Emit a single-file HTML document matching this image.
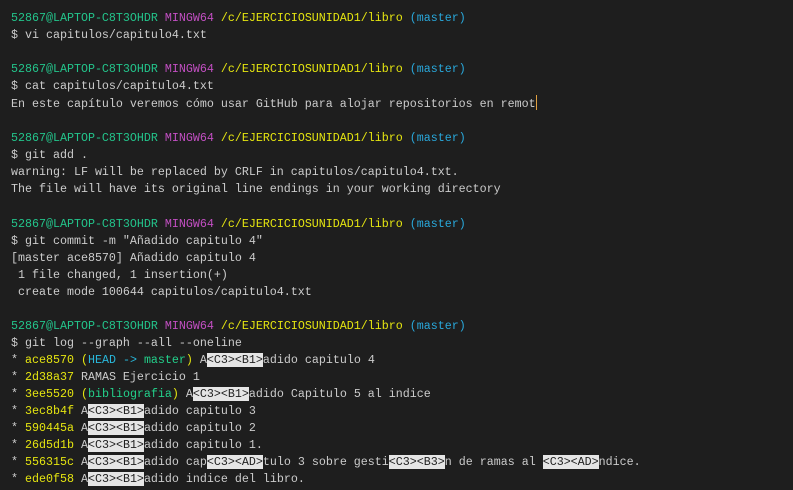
<!DOCTYPE html>
<html><head><meta charset="utf-8"><style>
html,body{margin:0;padding:0;background:#1e1e1e;width:793px;height:490px;overflow:hidden}
pre{margin:0;position:absolute;left:11px;top:10px;font-family:"Liberation Mono","DejaVu Sans Mono",monospace;font-size:11.67px;line-height:17.04px;color:#cccccc;white-space:pre}
.g{color:#23c48b}.m{color:#c34fc3}.y{color:#e5e510}.c{color:#29a8db}.h{color:#29b8db}.gr{color:#23d18b}
.b{background:#e5e5e5;color:#1e1e1e}
.cur{display:inline-block;width:1px;height:15px;background:#e0a040;vertical-align:-3px}
</style></head><body><pre><span class="g">52867@LAPTOP-C8T3OHDR</span> <span class="m">MINGW64</span> <span class="y">/c/EJERCICIOSUNIDAD1/libro</span> <span class="c">(master)</span>
$ vi capitulos/capitulo4.txt

<span class="g">52867@LAPTOP-C8T3OHDR</span> <span class="m">MINGW64</span> <span class="y">/c/EJERCICIOSUNIDAD1/libro</span> <span class="c">(master)</span>
$ cat capitulos/capitulo4.txt
En este capítulo veremos cómo usar GitHub para alojar repositorios en remot<span class="cur"></span>

<span class="g">52867@LAPTOP-C8T3OHDR</span> <span class="m">MINGW64</span> <span class="y">/c/EJERCICIOSUNIDAD1/libro</span> <span class="c">(master)</span>
$ git add .
warning: LF will be replaced by CRLF in capitulos/capitulo4.txt.
The file will have its original line endings in your working directory

<span class="g">52867@LAPTOP-C8T3OHDR</span> <span class="m">MINGW64</span> <span class="y">/c/EJERCICIOSUNIDAD1/libro</span> <span class="c">(master)</span>
$ git commit -m "Añadido capitulo 4"
[master ace8570] Añadido capitulo 4
 1 file changed, 1 insertion(+)
 create mode 100644 capitulos/capitulo4.txt

<span class="g">52867@LAPTOP-C8T3OHDR</span> <span class="m">MINGW64</span> <span class="y">/c/EJERCICIOSUNIDAD1/libro</span> <span class="c">(master)</span>
$ git log --graph --all --oneline
* <span class="y">ace8570</span> <span class="y">(</span><span class="h">HEAD -&gt; </span><span class="gr">master</span><span class="y">)</span> A<span class="b">&lt;C3&gt;&lt;B1&gt;</span>adido capitulo 4
* <span class="y">2d38a37</span> RAMAS Ejercicio 1
* <span class="y">3ee5520</span> <span class="y">(</span><span class="gr">bibliografia</span><span class="y">)</span> A<span class="b">&lt;C3&gt;&lt;B1&gt;</span>adido Capitulo 5 al indice
* <span class="y">3ec8b4f</span> A<span class="b">&lt;C3&gt;&lt;B1&gt;</span>adido capitulo 3
* <span class="y">590445a</span> A<span class="b">&lt;C3&gt;&lt;B1&gt;</span>adido capitulo 2
* <span class="y">26d5d1b</span> A<span class="b">&lt;C3&gt;&lt;B1&gt;</span>adido capitulo 1.
* <span class="y">556315c</span> A<span class="b">&lt;C3&gt;&lt;B1&gt;</span>adido cap<span class="b">&lt;C3&gt;&lt;AD&gt;</span>tulo 3 sobre gesti<span class="b">&lt;C3&gt;&lt;B3&gt;</span>n de ramas al <span class="b">&lt;C3&gt;&lt;AD&gt;</span>ndice.
* <span class="y">ede0f58</span> A<span class="b">&lt;C3&gt;&lt;B1&gt;</span>adido indice del libro.</pre></body></html>
